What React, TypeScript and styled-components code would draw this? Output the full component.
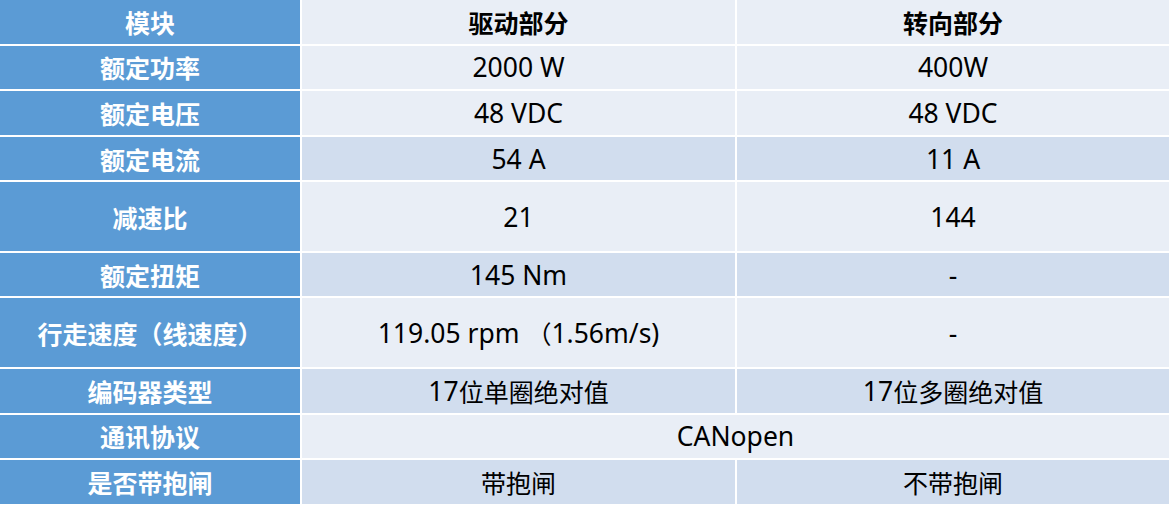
import React from "react";
import styled, { createGlobalStyle } from "styled-components";

type Band = "light" | "dark";

interface SpecRow {
  label: string;
  drive: string;
  steer?: string;
  band: Band;
  tall?: boolean;
  span?: boolean;
}

const GlobalStyle = createGlobalStyle`
  html, body {
    margin: 0;
    padding: 0;
    background: #ffffff;
  }
`;

const bandColors: Record<Band, string> = {
  light: "#e9eef6",
  dark: "#d1ddee",
};

const Table = styled.div<{ $rows: string }>`
  display: grid;
  grid-template-columns: 300px 433px 432px;
  grid-template-rows: ${({ $rows }) => $rows};
  column-gap: 2px;
  row-gap: 2px;
  width: 1169px;
  background: #ffffff;
  font-family: "Noto Sans", "Noto Sans CJK SC", sans-serif;
  font-size: 25px;
`;

const LabelCell = styled.div`
  display: flex;
  align-items: center;
  justify-content: center;
  background: #5b9bd5;
  color: #ffffff;
  font-weight: 700;
  font-family: "Noto Sans CJK SC", "Noto Sans", sans-serif;
`;

const ValueCell = styled.div<{ $band: Band; $bold?: boolean; $span?: boolean }>`
  display: flex;
  align-items: center;
  justify-content: center;
  background: ${({ $band }) => bandColors[$band]};
  color: #000000;
  font-weight: ${({ $bold }) => ($bold ? 700 : 400)};
  grid-column: ${({ $span }) => ($span ? "span 2" : "auto")};
  white-space: pre;
`;

// latin runs look a size larger than the CJK ones in the source
const Latin = styled.span`
  font-size: 26.5px;
`;

const rows: SpecRow[] = [
  { label: "额定功率", drive: "2000 W", steer: "400W", band: "light" },
  { label: "额定电压", drive: "48 VDC", steer: "48 VDC", band: "light" },
  { label: "额定电流", drive: "54 A", steer: "11 A", band: "dark" },
  { label: "减速比", drive: "21", steer: "144", band: "light", tall: true },
  { label: "额定扭矩", drive: "145 Nm", steer: "-", band: "dark" },
  {
    label: "行走速度（线速度）",
    drive: "119.05 rpm （1.56m/s)",
    steer: "-",
    band: "light",
    tall: true,
  },
  { label: "编码器类型", drive: "17位单圈绝对值", steer: "17位多圈绝对值", band: "dark" },
  { label: "通讯协议", drive: "CANopen", band: "light", span: true },
  { label: "是否带抱闸", drive: "带抱闸", steer: "不带抱闸", band: "dark" },
];

const rowTemplate = ["43.6px"]
  .concat(rows.map((r) => (r.tall ? "68.5px" : "43.6px")))
  .join(" ");

// split a value into latin and CJK runs
const renderValue = (text?: string) =>
  (text ?? "")
    .split(/([\u3000-\u9fff\uff00-\uffef]+)/)
    .filter(Boolean)
    .map((part, i) =>
      /[\u3000-\u9fff\uff00-\uffef]/.test(part) ? (
        <span key={i}>{part}</span>
      ) : (
        <Latin key={i}>{part}</Latin>
      )
    );

export default function App() {
  return (
    <>
      <GlobalStyle />
      <Table $rows={rowTemplate}>
        <LabelCell>模块</LabelCell>
        <ValueCell $band="light" $bold>
          驱动部分
        </ValueCell>
        <ValueCell $band="light" $bold>
          转向部分
        </ValueCell>
        {rows.map((row) => (
          <React.Fragment key={row.label}>
            <LabelCell>{row.label}</LabelCell>
            <ValueCell $band={row.band} $span={row.span}>
              {renderValue(row.drive)}
            </ValueCell>
            {!row.span && (
              <ValueCell $band={row.band}>{renderValue(row.steer)}</ValueCell>
            )}
          </React.Fragment>
        ))}
      </Table>
    </>
  );
}
